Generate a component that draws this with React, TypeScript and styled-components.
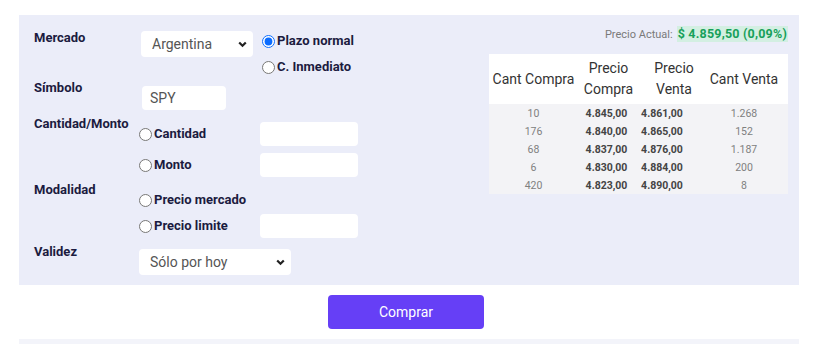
import React from "react";
import styled, { createGlobalStyle } from "styled-components";

const Global = createGlobalStyle`
  html, body { margin: 0; padding: 0; background: #ffffff; }
  body { font-family: Roboto, "Noto Sans", Arial, sans-serif; }
  * { box-sizing: border-box; }
`;

const Page = styled.div`
  width: 813px;
  padding: 15px 14px 0 19px;
`;

const Panel = styled.div`
  background: #ebedf9;
  display: flex;
  justify-content: space-between;
  height: 270px;
  padding: 0 11px 0 15px;
`;

const Form = styled.div`
  display: flex;
  flex-direction: column;
  padding-top: 15px;
`;

const Row = styled.div<{ $mt: number }>`
  display: flex;
  margin-top: ${(p) => p.$mt}px;
`;

const Label = styled.div`
  width: 105px;
  font-size: 13px;
  line-height: 16px;
  font-weight: 700;
  color: #1b1b40;
`;

const Content = styled.div<{ $offset: number; $gap?: number }>`
  display: flex;
  flex-direction: column;
  gap: ${(p) => p.$gap ?? 0}px;
  padding-top: ${(p) => p.$offset}px;
`;

const Line = styled.div<{ $top?: boolean }>`
  display: flex;
  align-items: ${(p) => (p.$top ? "flex-start" : "center")};
`;

const SelectWrap = styled.div<{ $w: number; $ml?: number }>`
  position: relative;
  width: ${(p) => p.$w}px;
  height: 26px;
  margin-left: ${(p) => p.$ml ?? 0}px;
`;

const Select = styled.select`
  appearance: none;
  -webkit-appearance: none;
  width: 100%;
  height: 26px;
  border: none;
  border-radius: 4px;
  background: #ffffff;
  font-family: Roboto, Arial, sans-serif;
  font-size: 14px;
  font-weight: 400;
  color: #555;
  padding: 0 0 0 11px;
  outline: none;
`;

const Chevron = styled.svg`
  position: absolute;
  right: 6px;
  top: 10px;
  pointer-events: none;
`;

const TextInput = styled.input<{ $w: number; $ml?: number }>`
  width: ${(p) => p.$w}px;
  height: 24px;
  border: none;
  border-radius: 4px;
  background: #ffffff;
  font-family: Roboto, Arial, sans-serif;
  font-size: 14px;
  color: #555;
  padding: 0 8px;
  margin-left: ${(p) => p.$ml ?? 0}px;
  outline: none;
`;

const RadioGroup = styled.div`
  display: flex;
  flex-direction: column;
  gap: 10px;
  margin-left: 9px;
  padding-top: 2px;
`;

const RadioLabel = styled.label<{ $w?: number }>`
  display: flex;
  align-items: center;
  width: ${(p) => (p.$w ? `${p.$w}px` : "auto")};
  font-size: 13px;
  line-height: 16px;
  font-weight: 700;
  color: #1b1b40;
  input {
    margin: 0 2px 0 0;
    width: 13px;
    height: 13px;
    accent-color: #0a6cff;
  }
`;

const Right = styled.div`
  display: flex;
  flex-direction: column;
  align-items: flex-end;
  padding-top: 11px;
`;

const PriceLine = styled.div`
  display: flex;
  align-items: center;
  height: 16px;
  font-size: 11px;
  color: #7a7a7a;
`;

const PriceValue = styled.span`
  margin-left: 4px;
  background: #d3efe2;
  color: #17a05a;
  font-weight: 700;
  font-size: 12.5px;
  line-height: 16px;
  padding: 0 1px;
  letter-spacing: 0.2px;
`;

const Table = styled.div`
  margin-top: 12px;
  width: 299px;
`;

const Head = styled.div`
  display: grid;
  grid-template-columns: 89px 61px 70px 1fr;
  background: #ffffff;
  height: 50px;
  align-items: center;
  font-size: 14px;
  line-height: 21px;
  color: #333;
  text-align: center;
  white-space: nowrap;
`;

const HeadCell = styled.div<{ $pr?: number }>`
  padding-right: ${(p) => p.$pr ?? 0}px;
`;

const Body = styled.div`
  background: #f3f3f6;
`;

const BodyRow = styled.div`
  display: grid;
  grid-template-columns: 89px 61px 70px 1fr;
  height: 18px;
  align-items: center;
  text-align: center;
  font-size: 10.5px;
`;

const Qty = styled.div<{ $pr?: number }>`
  color: #808080;
  font-weight: 400;
  padding-right: ${(p) => p.$pr ?? 0}px;
`;

const Price = styled.div<{ $pr?: number }>`
  color: #444;
  font-weight: 700;
  padding-right: ${(p) => p.$pr ?? 0}px;
`;

const ButtonBar = styled.div`
  display: flex;
  justify-content: center;
  padding: 10px 6px 10px 0;
`;

const Button = styled.button`
  width: 156px;
  height: 34px;
  border: none;
  border-radius: 4px;
  background: #663ff6;
  color: #ffffff;
  font-family: Roboto, Arial, sans-serif;
  font-size: 14px;
  font-weight: 400;
`;

const Strip = styled.div`
  height: 8px;
  background: #f3f4fa;
`;

const ChevronIcon = () => (
  <Chevron width="9" height="7" viewBox="0 0 9 7">
    <path d="M1.2 1.5 L4.5 4.8 L7.8 1.5" fill="none" stroke="#222" strokeWidth="2.2" />
  </Chevron>
);

const rows = [
  ["10", "4.845,00", "4.861,00", "1.268"],
  ["176", "4.840,00", "4.865,00", "152"],
  ["68", "4.837,00", "4.876,00", "1.187"],
  ["6", "4.830,00", "4.884,00", "200"],
  ["420", "4.823,00", "4.890,00", "8"],
];

export default function App() {
  return (
    <Page>
      <Global />
      <Panel>
        <Form>
          <Row $mt={0}>
            <Label>Mercado</Label>
            <Content $offset={1}>
              <Line $top>
                <SelectWrap $w={112} $ml={2}>
                  <Select defaultValue="ar">
                    <option value="ar">Argentina</option>
                  </Select>
                  <ChevronIcon />
                </SelectWrap>
                <RadioGroup>
                  <RadioLabel>
                    <input type="radio" name="plazo" defaultChecked />
                    Plazo normal
                  </RadioLabel>
                  <RadioLabel>
                    <input type="radio" name="plazo" />
                    C. Inmediato
                  </RadioLabel>
                </RadioGroup>
              </Line>
            </Content>
          </Row>
          <Row $mt={5}>
            <Label>Símbolo</Label>
            <Content $offset={6}>
              <TextInput $w={84} $ml={3} defaultValue="SPY" />
            </Content>
          </Row>
          <Row $mt={6}>
            <Label>Cantidad/Monto</Label>
            <Content $offset={6} $gap={7}>
              <Line>
                <RadioLabel $w={121}>
                  <input type="radio" name="cm" />
                  Cantidad
                </RadioLabel>
                <TextInput $w={98} />
              </Line>
              <Line>
                <RadioLabel $w={121}>
                  <input type="radio" name="cm" />
                  Monto
                </RadioLabel>
                <TextInput $w={98} />
              </Line>
            </Content>
          </Row>
          <Row $mt={5}>
            <Label>Modalidad</Label>
            <Content $offset={10} $gap={6}>
              <Line>
                <RadioLabel $w={121}>
                  <input type="radio" name="mod" />
                  Precio mercado
                </RadioLabel>
              </Line>
              <Line>
                <RadioLabel $w={121}>
                  <input type="radio" name="mod" />
                  Precio limite
                </RadioLabel>
                <TextInput $w={98} />
              </Line>
            </Content>
          </Row>
          <Row $mt={6}>
            <Label>Validez</Label>
            <Content $offset={5}>
              <SelectWrap $w={152}>
                <Select defaultValue="hoy">
                  <option value="hoy">Sólo por hoy</option>
                </Select>
                <ChevronIcon />
              </SelectWrap>
            </Content>
          </Row>
        </Form>
        <Right>
          <PriceLine>
            Precio Actual:
            <PriceValue>$ 4.859,50 (0,09%)</PriceValue>
          </PriceLine>
          <Table>
            <Head>
              <HeadCell>Cant Compra</HeadCell>
              <HeadCell>
                Precio
                <br />
                Compra
              </HeadCell>
              <HeadCell>
                Precio
                <br />
                Venta
              </HeadCell>
              <HeadCell $pr={9}>Cant Venta</HeadCell>
            </Head>
            <Body>
              {rows.map((r, i) => (
                <BodyRow key={i}>
                  <Qty>{r[0]}</Qty>
                  <Price $pr={4}>{r[1]}</Price>
                  <Price $pr={24}>{r[2]}</Price>
                  <Qty $pr={9}>{r[3]}</Qty>
                </BodyRow>
              ))}
            </Body>
          </Table>
        </Right>
      </Panel>
      <ButtonBar>
        <Button>Comprar</Button>
      </ButtonBar>
      <Strip />
    </Page>
  );
}
